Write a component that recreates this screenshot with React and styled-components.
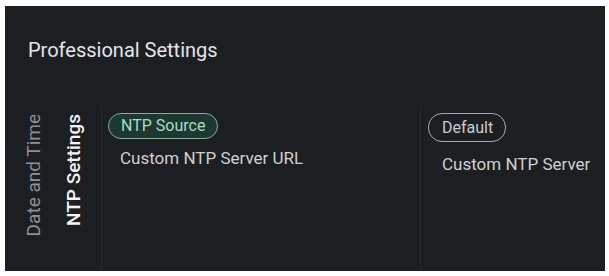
import React from 'react';
import styled, { createGlobalStyle } from 'styled-components';

const GlobalStyle = createGlobalStyle`
  html, body {
    margin: 0;
    padding: 0;
    background: #ffffff;
  }
  body {
    font-family: Roboto, "Liberation Sans", Arial, sans-serif;
  }
`;

const Page = styled.div`
  padding: 6px 4px 5px 5px;
`;

const Panel = styled.div`
  width: 600px;
  height: 265px;
  background: #1c1f22;
  display: flex;
  flex-direction: column;
  overflow: hidden;
`;

const Header = styled.div`
  height: 99px;
  box-sizing: border-box;
  padding: 32px 23px 0;
`;

const Title = styled.div`
  font-size: 20px;
  line-height: 24px;
  color: #e4e5e6;
`;

const Body = styled.div`
  flex: 1;
  display: flex;
`;

const Breadcrumbs = styled.div`
  width: 97px;
  box-sizing: border-box;
  padding: 9px 0 0 18px;
  display: flex;
  align-items: flex-start;
  gap: 18px;
  border-right: 1px solid #26292d;
`;

const VerticalLabel = styled.div`
  writing-mode: vertical-rl;
  transform: rotate(180deg);
  font-size: 19px;
  line-height: 22px;
  white-space: nowrap;
  font-weight: ${p => (p.$active ? 500 : 400)};
  color: ${p => (p.$active ? '#f2f2f2' : '#8d9094')};
`;

const Column = styled.div`
  width: ${p => p.$width || 'auto'};
  flex: ${p => (p.$width ? 'none' : 1)};
  box-sizing: border-box;
  padding: 8px 0 0 ${p => p.$pad}px;
  display: flex;
  flex-direction: column;
  align-items: flex-start;
  border-right: ${p => (p.$divider ? '1px solid #26292d' : 'none')};
`;

const Pill = styled.div`
  height: ${p => p.$h}px;
  box-sizing: border-box;
  padding: 0 12px 0 ${p => p.$left || 12}px;
  border-radius: 14px;
  font-size: 16px;
  line-height: ${p => p.$h - 2}px;
  white-space: nowrap;
  border: 1px solid ${p => (p.$focused ? '#86ad9e' : '#a9abad')};
  background: ${p => (p.$focused ? '#1d3830' : 'transparent')};
  color: ${p => (p.$focused ? '#a7dcc4' : '#c9cbcd')};
`;

const Item = styled.div`
  margin-top: ${p => p.$gap}px;
  margin-left: ${p => p.$indent}px;
  font-size: 17px;
  line-height: 20px;
  color: #cfd0d2;
  white-space: nowrap;
`;

export default function App() {
  return (
    <>
      <GlobalStyle />
      <Page>
        <Panel>
          <Header>
            <Title>Professional Settings</Title>
          </Header>
          <Body>
            <Breadcrumbs>
              <VerticalLabel>Date and Time</VerticalLabel>
              <VerticalLabel $active>NTP Settings</VerticalLabel>
            </Breadcrumbs>
            <Column $width="319px" $pad={6} $divider>
              <Pill $focused $h={26}>NTP Source</Pill>
              <Item $gap={9} $indent={12}>Custom NTP Server URL</Item>
            </Column>
            <Column $pad={7}>
              <Pill $h={29} $left={13}>Default</Pill>
              <Item $gap={12} $indent={14}>Custom NTP Server</Item>
            </Column>
          </Body>
        </Panel>
      </Page>
    </>
  );
}
